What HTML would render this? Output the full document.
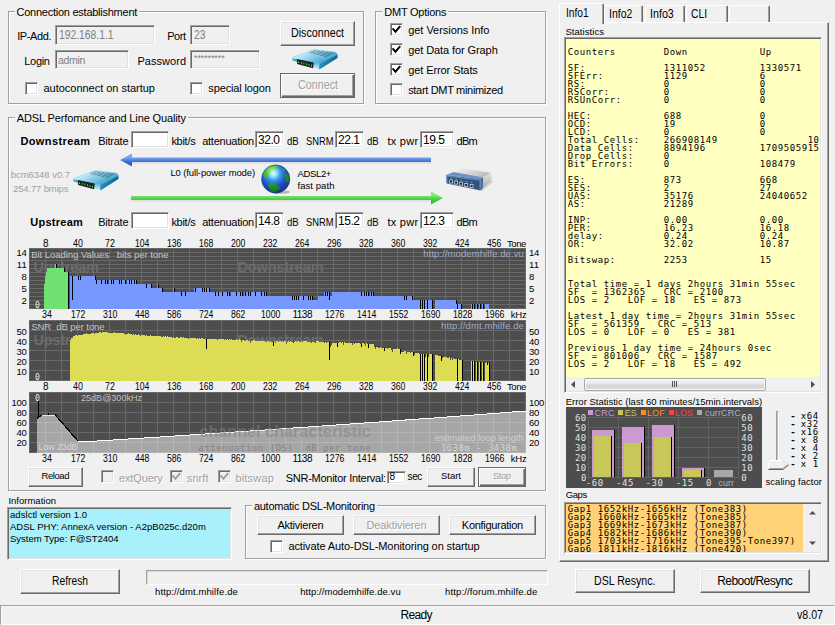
<!DOCTYPE html>
<html lang="en"><head><meta charset="utf-8"><title>DMT</title>
<style>
html,body{margin:0;padding:0;background:#F0F0F0;}
#win{position:relative;width:835px;height:625px;overflow:hidden;background:#F0F0F0;font-family:"Liberation Sans",Arial,sans-serif;font-size:11px;color:#000;}
#win div,#win span.t,#win svg{position:absolute;box-sizing:border-box;}
.t{white-space:pre;transform-origin:0 0;}
.m{font-family:"DejaVu Sans Mono","Liberation Mono",monospace;}
.grp{border:1px solid #A0A0A0;box-shadow:inset 1px 1px 0 #FFF,1px 1px 0 #FFF;}
.gt{background:#F0F0F0;}
.edit{border:1px solid;border-color:#A0A0A0 #FFF #FFF #A0A0A0;box-shadow:inset 1px 1px 0 #696969,inset -1px -1px 0 #E3E3E3;background:#FFF;}
.edit.dis{background:#F0F0F0;}
.btn{border:1px solid;border-color:#FFF #696969 #696969 #FFF;box-shadow:inset -1px -1px 0 #A0A0A0,inset 1px 1px 0 #E3E3E3;background:#F0F0F0;}
.btn.def{border-color:#696969;box-shadow:inset 1px 1px 0 #FFF,inset -1px -1px 0 #696969,inset -2px -2px 0 #A0A0A0;}
.cb{border:1px solid;border-color:#A0A0A0 #FFF #FFF #A0A0A0;box-shadow:inset 1px 1px 0 #696969,inset -1px -1px 0 #E3E3E3;background:#FFF;}
.cb.dis{background:#F0F0F0;}
.dt{color:#A0A0A0;text-shadow:1px 1px 0 #FFF;}

</style></head>
<body>
<div id="win">
<div class="grp" style="left:8px;top:11px;width:356px;height:93px;"></div>
<div class="gt" style="left:14.5px;top:9px;width:124.5px;height:5px;"></div>
<div class="edit dis" style="left:55px;top:25px;width:100px;height:20px;"></div>
<div class="edit dis" style="left:190px;top:25px;width:40px;height:20px;"></div>
<div class="edit dis" style="left:55px;top:50px;width:74px;height:19px;"></div>
<div class="edit dis" style="left:190px;top:50px;width:70px;height:19px;"></div>
<div class="cb" style="left:25px;top:82px;width:13px;height:13px;"></div>
<div class="cb" style="left:190px;top:82px;width:13px;height:13px;"></div>
<div class="btn" style="left:280px;top:21px;width:75px;height:25px;"></div>
<div class="btn def" style="left:280px;top:73px;width:75px;height:25px;"></div>
<div class="grp" style="left:375px;top:11px;width:171px;height:93px;"></div>
<div class="gt" style="left:382.3px;top:9px;width:66px;height:5px;"></div>
<div class="cb" style="left:390px;top:23px;width:13px;height:13px;"><svg width="13" height="13" viewBox="0 0 13 13" style="left:-1px;top:-1px"><path d="M3.2 6 L5.5 8.7 L9.6 3.8" fill="none" stroke="#000" stroke-width="1.9" stroke-linecap="square" stroke-linejoin="miter"/></svg></div>
<div class="cb" style="left:390px;top:43px;width:13px;height:13px;"><svg width="13" height="13" viewBox="0 0 13 13" style="left:-1px;top:-1px"><path d="M3.2 6 L5.5 8.7 L9.6 3.8" fill="none" stroke="#000" stroke-width="1.9" stroke-linecap="square" stroke-linejoin="miter"/></svg></div>
<div class="cb" style="left:390px;top:63px;width:13px;height:13px;"><svg width="13" height="13" viewBox="0 0 13 13" style="left:-1px;top:-1px"><path d="M3.2 6 L5.5 8.7 L9.6 3.8" fill="none" stroke="#000" stroke-width="1.9" stroke-linecap="square" stroke-linejoin="miter"/></svg></div>
<div class="cb" style="left:390px;top:83px;width:13px;height:13px;"></div>
<div class="grp" style="left:8px;top:117px;width:538px;height:374px;"></div>
<div class="gt" style="left:14.8px;top:115px;width:173px;height:5px;"></div>
<div class="edit" style="left:131px;top:131px;width:38px;height:17px;"></div>
<div class="edit" style="left:255px;top:131px;width:29px;height:17px;"></div>
<div class="edit" style="left:335px;top:131px;width:29px;height:17px;"></div>
<div class="edit" style="left:420px;top:131px;width:34px;height:17px;"></div>
<div class="edit" style="left:131px;top:212px;width:38px;height:17px;"></div>
<div class="edit" style="left:255px;top:212px;width:29px;height:17px;"></div>
<div class="edit" style="left:335px;top:212px;width:29px;height:17px;"></div>
<div class="edit" style="left:420px;top:212px;width:34px;height:17px;"></div>
<svg width="330" height="16" viewBox="0 0 330 16" style="left:118px;top:152px">
<defs><linearGradient id="gb" x1="0" y1="0" x2="0" y2="1"><stop offset="0.3" stop-color="#7CA4EE"/><stop offset="0.5" stop-color="#5584DC"/><stop offset="0.7" stop-color="#3461C6"/></linearGradient></defs>
<path d="M14 10.5 H313 V11.5 H14 Z" fill="#000" opacity="0.13"/><path d="M2 8 L14 1.5 L14 5.5 L313 5.5 L313 10 L14 10 L14 14.5 Z" fill="url(#gb)"/></svg>
<svg width="330" height="18" viewBox="0 0 330 18" style="left:128px;top:189px">
<defs><linearGradient id="gg" x1="0" y1="0" x2="0" y2="1"><stop offset="0.3" stop-color="#84E878"/><stop offset="0.5" stop-color="#5AD650"/><stop offset="0.7" stop-color="#38C438"/></linearGradient></defs>
<path d="M3 11.5 H303 V12.5 H3 Z" fill="#000" opacity="0.13"/><path d="M3 7 L303 7 L303 2.5 L315 9 L303 15.5 L303 11 L3 11 Z" fill="url(#gg)"/></svg>
<svg width="497" height="61" viewBox="0 0 497 61" shape-rendering="crispEdges" style="left:29px;top:248px"><rect width="497" height="61" fill="#4D4D4D"/><path d="M0.5 0V61M16.5 0V61M32.5 0V61M48.5 0V61M64.5 0V61M80.5 0V61M96.5 0V61M112.5 0V61M128.5 0V61M144.5 0V61M160.5 0V61M176.5 0V61M192.5 0V61M208.5 0V61M224.5 0V61M240.5 0V61M256.5 0V61M272.5 0V61M288.5 0V61M304.5 0V61M320.5 0V61M336.5 0V61M352.5 0V61M368.5 0V61M384.5 0V61M400.5 0V61M416.5 0V61M432.5 0V61M448.5 0V61M464.5 0V61M480.5 0V61M496.5 0V61M0 0.5H497M0 4.5H497M0 8.5H497M0 12.5H497M0 16.5H497M0 20.5H497M0 24.5H497M0 28.5H497M0 32.5H497M0 36.5H497M0 40.5H497M0 44.5H497M0 48.5H497M0 52.5H497M0 56.5H497M0 60.5H497" stroke="#696969" stroke-width="1" fill="none"/><text x="4.4" y="24" font-size="14.5" font-weight="700" fill="#6B6B6B" textLength="65.4" lengthAdjust="spacing" shape-rendering="auto">Upstream</text><text x="208.4" y="24" font-size="14.5" font-weight="700" fill="#6B6B6B" textLength="86.3" lengthAdjust="spacing">Downstream</text><path d="M15 36H16V61H15ZM16 28H17V61H16ZM17 24H18V61H17ZM18 20H26V61H18ZM26 16H27V61H26ZM27 20H35V61H27ZM35 24H39V61H35Z" fill="#70E070"/><path d="M41 28H43V61H41ZM43 52H44V61H43ZM44 28H49V61H44ZM49 32H50V61H49ZM50 28H51V61H50ZM51 32H52V61H51ZM52 28H66V61H52ZM66 32H67V61H66ZM67 36H68V61H67ZM68 32H72V61H68ZM72 36H73V61H72ZM73 32H76V61H73ZM76 36H77V61H76ZM77 32H78V61H77ZM78 36H80V61H78ZM80 32H82V61H80ZM82 36H83V61H82ZM83 32H84V61H83ZM84 36H85V61H84ZM85 32H90V61H85ZM90 36H91V61H90ZM91 32H92V61H91ZM92 36H93V61H92ZM93 32H96V61H93ZM96 36H98V61H96ZM98 32H100V61H98ZM100 36H101V61H100ZM101 32H102V61H101ZM102 36H103V61H102ZM103 32H105V61H103ZM105 36H106V61H105ZM106 32H107V61H106ZM107 36H117V61H107ZM117 40H118V61H117ZM118 36H122V61H118ZM122 40H128V61H122ZM128 36H129V61H128ZM129 40H133V61H129ZM133 44H144V61H133ZM144 40H145V61H144ZM145 44H152V61H145ZM152 48H153V61H152ZM153 44H156V61H153ZM156 48H157V61H156ZM157 44H165V61H157ZM165 40H166V61H165ZM166 44H167V61H166ZM167 40H173V61H167ZM173 44H174V61H173ZM174 40H175V61H174ZM175 44H176V61H175ZM176 40H177V61H176ZM177 44H178V61H177ZM178 40H180V61H178ZM180 44H186V61H180ZM186 48H187V61H186ZM187 44H189V61H187ZM189 48H190V61H189ZM190 44H193V61H190ZM193 48H194V61H193ZM194 44H198V61H194ZM198 48H199V61H198ZM199 44H200V61H199ZM200 48H202V61H200ZM202 44H207V61H202ZM207 48H208V61H207ZM208 44H211V61H208ZM211 48H212V61H211ZM212 44H213V61H212ZM213 48H215V61H213ZM215 44H216V61H215ZM216 48H217V61H216ZM217 44H219V61H217ZM219 48H220V61H219ZM220 44H221V61H220ZM221 48H222V61H221ZM222 44H226V61H222ZM226 48H227V61H226ZM227 44H232V61H227ZM232 48H233V61H232ZM233 44H235V61H233ZM235 48H236V61H235ZM236 44H237V61H236ZM237 48H263V61H237ZM263 52H264V61H263ZM264 48H265V61H264ZM265 52H266V61H265ZM266 48H267V61H266ZM267 52H268V61H267ZM268 48H269V61H268ZM269 52H270V61H269ZM270 48H274V61H270ZM274 52H275V61H274ZM275 48H279V61H275ZM279 52H280V61H279ZM280 48H281V61H280ZM281 52H282V61H281ZM282 48H283V61H282ZM283 52H289V61H283ZM289 48H295V61H289ZM295 44H296V61H295ZM296 48H297V61H296ZM297 44H298V61H297ZM298 48H299V61H298ZM299 44H300V61H299ZM300 52H301V61H300ZM301 48H303V61H301ZM303 44H332V61H303ZM332 48H333V61H332ZM333 44H335V61H333ZM335 48H336V61H335ZM336 44H337V61H336ZM337 48H338V61H337ZM338 44H339V61H338ZM339 48H341V61H339ZM341 44H342V61H341ZM342 48H343V61H342ZM343 44H344V61H343ZM344 48H375V61H344ZM375 52H376V61H375ZM376 48H377V61H376ZM377 52H378V61H377ZM378 48H383V61H378ZM383 52H391V61H383ZM392 52H393V61H392ZM394 52H395V61H394ZM396 52H398V61H396ZM399 52H403V61H399ZM406 52H427V61H406ZM427 56H428V61H427ZM429 56H432V61H429ZM442 56H443V61H442ZM444 56H445V61H444ZM447 56H448V61H447ZM450 56H451V61H450ZM453 56H454V61H453ZM456 56H460V61H456Z" fill="#7799FF"/><path d="M27 16H28V20H27ZM35 20H36V24H35ZM39 24H40V61H39ZM43 28H44V52H43ZM49 28H50V32H49ZM51 28H52V32H51ZM66 28H67V32H66ZM67 32H68V36H67ZM72 32H73V36H72ZM76 32H77V36H76ZM78 32H79V36H78ZM82 32H83V36H82ZM84 32H85V36H84ZM90 32H91V36H90ZM92 32H93V36H92ZM96 32H97V36H96ZM100 32H101V36H100ZM102 32H103V36H102ZM105 32H106V36H105ZM107 32H108V36H107ZM117 36H118V40H117ZM122 36H123V40H122ZM129 36H130V40H129ZM133 40H134V44H133ZM145 40H146V44H145ZM152 44H153V48H152ZM156 44H157V48H156ZM166 40H167V44H166ZM173 40H174V44H173ZM175 40H176V44H175ZM177 40H178V44H177ZM180 40H181V44H180ZM186 44H187V48H186ZM189 44H190V48H189ZM193 44H194V48H193ZM198 44H199V48H198ZM200 44H201V48H200ZM207 44H208V48H207ZM211 44H212V48H211ZM213 44H214V48H213ZM216 44H217V48H216ZM219 44H220V48H219ZM221 44H222V48H221ZM226 44H227V48H226ZM232 44H233V48H232ZM235 44H236V48H235ZM237 44H238V48H237ZM263 48H264V52H263ZM265 48H266V52H265ZM267 48H268V52H267ZM269 48H270V52H269ZM274 48H275V52H274ZM279 48H280V52H279ZM281 48H282V52H281ZM283 48H284V52H283ZM296 44H297V48H296ZM298 44H299V48H298ZM300 44H301V52H300ZM332 44H333V48H332ZM335 44H336V48H335ZM337 44H338V48H337ZM339 44H340V48H339ZM342 44H343V48H342ZM344 44H345V48H344ZM375 48H376V52H375ZM377 48H378V52H377ZM383 48H384V52H383ZM391 52H392V61H391ZM393 52H394V61H393ZM395 52H396V61H395ZM398 52H399V61H398ZM403 52H404V61H403ZM427 52H428V56H427ZM428 56H429V61H428ZM432 56H433V61H432ZM443 56H444V61H443ZM445 56H446V61H445ZM448 56H449V61H448ZM451 56H452V61H451ZM454 56H455V61H454Z" fill="#000"/></svg>
<svg width="497" height="61" viewBox="0 0 497 61" shape-rendering="crispEdges" style="left:29px;top:320px"><rect width="497" height="61" fill="#4D4D4D"/><path d="M0.5 0V61M16.5 0V61M32.5 0V61M48.5 0V61M64.5 0V61M80.5 0V61M96.5 0V61M112.5 0V61M128.5 0V61M144.5 0V61M160.5 0V61M176.5 0V61M192.5 0V61M208.5 0V61M224.5 0V61M240.5 0V61M256.5 0V61M272.5 0V61M288.5 0V61M304.5 0V61M320.5 0V61M336.5 0V61M352.5 0V61M368.5 0V61M384.5 0V61M400.5 0V61M416.5 0V61M432.5 0V61M448.5 0V61M464.5 0V61M480.5 0V61M496.5 0V61M0 0.5H497M0 10.5H497M0 20.5H497M0 30.5H497M0 40.5H497M0 50.5H497M0 60.5H497" stroke="#696969" stroke-width="1" fill="none"/><text x="4.4" y="25" font-size="14.5" font-weight="700" fill="#6B6B6B" textLength="65.4" lengthAdjust="spacing">Upstream</text><text x="208.4" y="25" font-size="14.5" font-weight="700" fill="#6B6B6B" textLength="86.3" lengthAdjust="spacing">Downstream</text><path d="M41 20H42V61H41ZM42 18H44V61H42ZM44 16H46V61H44ZM46 15H48V61H46ZM48 16H49V61H48ZM49 15H54V61H49ZM54 14H57V61H54ZM57 13H58V61H57ZM58 14H62V61H58ZM62 13H65V61H62ZM65 14H66V61H65ZM66 13H70V61H66ZM70 12H72V61H70ZM72 13H73V61H72ZM73 12H79V61H73ZM79 13H85V61H79ZM85 12H86V61H85ZM86 13H95V61H86ZM95 14H96V61H95ZM96 15H97V61H96ZM97 14H99V61H97ZM99 13H100V61H99ZM100 14H103V61H100ZM103 15H104V61H103ZM104 14H105V61H104ZM105 15H106V61H105ZM106 14H107V61H106ZM107 15H109V61H107ZM109 14H110V61H109ZM110 15H111V61H110ZM111 16H112V61H111ZM112 15H116V61H112ZM116 16H117V61H116ZM117 15H118V61H117ZM118 16H121V61H118ZM121 15H122V61H121ZM122 16H132V61H122ZM132 17H134V61H132ZM134 16H135V61H134ZM135 17H136V61H135ZM136 16H137V61H136ZM137 17H138V61H137ZM138 16H139V61H138ZM139 17H143V61H139ZM143 18H144V61H143ZM144 17H145V61H144ZM145 18H147V61H145ZM147 17H149V61H147ZM149 18H151V61H149ZM151 17H153V61H151ZM153 18H154V61H153ZM154 17H155V61H154ZM155 18H159V61H155ZM159 19H160V61H159ZM160 18H167V61H160ZM167 19H168V61H167ZM168 18H169V61H168ZM169 19H170V61H169ZM170 18H171V61H170ZM171 19H172V61H171ZM172 18H174V61H172ZM174 19H177V61H174ZM177 29H178V61H177ZM178 19H188V61H178ZM188 20H189V61H188ZM189 19H195V61H189ZM195 20H196V61H195ZM196 19H197V61H196ZM197 20H198V61H197ZM198 19H199V61H198ZM199 20H200V61H199ZM200 19H201V61H200ZM201 20H202V61H201ZM202 19H203V61H202ZM203 20H207V61H203ZM207 19H208V61H207ZM208 20H210V61H208ZM210 19H211V61H210ZM211 20H212V61H211ZM212 22H213V61H212ZM213 20H215V61H213ZM215 21H217V61H215ZM217 20H219V61H217ZM219 21H221V61H219ZM221 23H222V61H221ZM222 21H224V61H222ZM224 20H226V61H224ZM226 21H236V61H226ZM236 22H238V61H236ZM238 21H240V61H238ZM240 22H241V61H240ZM241 21H242V61H241ZM242 22H244V61H242ZM244 26H245V61H244ZM245 21H246V61H245ZM246 23H247V61H246ZM247 21H249V61H247ZM249 22H250V61H249ZM250 21H252V61H250ZM252 22H253V61H252ZM253 21H254V61H253ZM254 22H255V61H254ZM255 21H257V61H255ZM257 24H258V61H257ZM258 22H259V61H258ZM259 21H260V61H259ZM260 22H261V61H260ZM261 21H262V61H261ZM262 22H264V61H262ZM264 23H265V61H264ZM265 22H266V61H265ZM266 21H267V61H266ZM267 22H268V61H267ZM268 21H270V61H268ZM270 22H272V61H270ZM272 21H273V61H272ZM273 22H274V61H273ZM274 21H278V61H274ZM278 22H282V61H278ZM282 23H283V61H282ZM283 22H286V61H283ZM286 23H287V61H286ZM287 21H290V61H287ZM290 22H295V61H290ZM295 23H296V61H295ZM296 22H297V61H296ZM297 23H298V61H297ZM298 22H300V61H298ZM300 40H301V61H300ZM301 27H302V61H301ZM302 25H303V61H302ZM303 23H308V61H303ZM308 27H309V61H308ZM309 23H310V61H309ZM310 22H312V61H310ZM312 23H313V61H312ZM313 22H314V61H313ZM314 25H315V61H314ZM315 22H316V61H315ZM316 23H323V61H316ZM323 25H324V61H323ZM324 23H325V61H324ZM325 24H326V61H325ZM326 23H331V61H326ZM331 24H332V61H331ZM332 27H333V61H332ZM333 23H335V61H333ZM335 24H336V61H335ZM336 26H337V61H336ZM337 23H338V61H337ZM338 24H339V61H338ZM339 28H340V61H339ZM340 24H345V61H340ZM345 27H346V61H345ZM346 29H347V61H346ZM347 27H349V61H347ZM349 28H351V61H349ZM351 27H352V61H351ZM352 28H355V61H352ZM355 31H356V61H355ZM356 28H358V61H356ZM358 29H359V61H358ZM359 28H362V61H359ZM362 30H363V61H362ZM363 32H364V61H363ZM364 29H368V61H364ZM368 28H369V61H368ZM369 29H371V61H369ZM371 34H372V61H371ZM372 32H375V61H372ZM375 31H377V61H375ZM377 34H378V61H377ZM378 32H381V61H378ZM381 33H382V61H381ZM382 32H384V61H382ZM384 36H385V61H384ZM385 35H386V61H385ZM386 33H390V61H386ZM390 34H391V61H390ZM392 34H393V61H392ZM394 34H395V61H394ZM396 37H397V61H396ZM397 34H398V61H397ZM399 37H400V61H399ZM400 34H403V61H400ZM406 35H409V61H406ZM409 36H412V61H409ZM412 41H413V61H412ZM413 38H414V61H413ZM414 37H418V61H414ZM418 38H420V61H418ZM420 37H421V61H420ZM421 40H422V61H421ZM422 38H423V61H422ZM423 40H424V61H423ZM424 38H425V61H424ZM425 39H428V61H425ZM429 39H430V61H429ZM430 40H433V61H430ZM442 41H443V61H442ZM444 41H445V61H444ZM447 42H448V61H447ZM450 42H451V61H450ZM453 42H454V61H453ZM456 43H457V61H456ZM457 42H458V61H457ZM458 45H459V61H458ZM459 43H460V61H459Z" fill="#DDDD55"/><path d="M177 19H178V29H177ZM244 22H245V26H244ZM300 22H301V40H300ZM308 23H309V27H308ZM332 24H333V27H332ZM339 24H340V28H339ZM355 28H356V31H355ZM371 29H372V34H371ZM384 32H385V36H384ZM391 34H392V61H391ZM393 34H394V61H393ZM395 34H396V61H395ZM398 34H399V61H398ZM403 34H404V61H403ZM412 36H413V41H412ZM428 39H429V61H428ZM433 40H434V61H433ZM443 41H444V61H443ZM445 41H446V61H445ZM448 42H449V61H448ZM451 42H452V61H451ZM454 42H455V61H454ZM458 42H459V45H458ZM460 43H461V61H460Z" fill="#000"/></svg>
<svg width="497" height="61" viewBox="0 0 497 61" shape-rendering="crispEdges" style="left:29px;top:392px"><rect width="497" height="61" fill="#4D4D4D"/><path d="M0.5 0V61M16.5 0V61M32.5 0V61M48.5 0V61M64.5 0V61M80.5 0V61M96.5 0V61M112.5 0V61M128.5 0V61M144.5 0V61M160.5 0V61M176.5 0V61M192.5 0V61M208.5 0V61M224.5 0V61M240.5 0V61M256.5 0V61M272.5 0V61M288.5 0V61M304.5 0V61M320.5 0V61M336.5 0V61M352.5 0V61M368.5 0V61M384.5 0V61M400.5 0V61M416.5 0V61M432.5 0V61M448.5 0V61M464.5 0V61M480.5 0V61M496.5 0V61M0 0.5H497M0 10.5H497M0 20.5H497M0 30.5H497M0 40.5H497M0 50.5H497M0 60.5H497" stroke="#696969" stroke-width="1" fill="none"/><polygon points="8,61 8,26.5 10,25 12,23.7 13,23.2 26.5,23.2 49.3,49.4 62,49.4 74,48.6 86,47.9 98,47.1 110,46.3 122,45.6 134,44.8 146,44.0 158,43.2 170,42.4 182,41.6 194,40.8 206,40.0 218,39.2 230,38.4 242,37.6 254,36.7 266,35.9 278,35.1 290,34.2 302,33.4 314,32.5 326,31.7 338,30.8 350,30.0 362,29.1 374,28.2 386,27.3 398,26.5 410,25.6 422,24.7 434,23.8 446,22.9 458,22.0 470,21.1 482,20.1 494,19.2 497,19.0 497,61" fill="rgba(255,255,255,0.5)"/><polyline points="49.3,49.4 62,49.4 74,48.6 86,47.9 98,47.1 110,46.3 122,45.6 134,44.8 146,44.0 158,43.2 170,42.4 182,41.6 194,40.8 206,40.0 218,39.2 230,38.4 242,37.6 254,36.7 266,35.9 278,35.1 290,34.2 302,33.4 314,32.5 326,31.7 338,30.8 350,30.0 362,29.1 374,28.2 386,27.3 398,26.5 410,25.6 422,24.7 434,23.8 446,22.9 458,22.0 470,21.1 482,20.1 494,19.2 497,19.0" fill="none" stroke="#FFF" stroke-width="1"/><polyline points="13,23.2 26.5,23.2" fill="none" stroke="#E8E8E8" stroke-width="1"/><polyline points="26.5,23.2 49.3,49.4" fill="none" stroke="#000" stroke-width="1.2"/><polyline points="8,26.5 10,25 12,23.7 13,23.2" fill="none" stroke="#000" stroke-width="1"/><path d="M9.5 5V26M19.5 20.5V23M26.5 21.5V23.5" stroke="#000" stroke-width="1" fill="none"/></svg>
<div class="btn" style="left:28px;top:467px;width:55px;height:20px;"></div>
<div class="cb dis" style="left:101px;top:470px;width:13px;height:13px;"></div>
<div class="cb dis" style="left:170px;top:470px;width:13px;height:13px;"><svg width="13" height="13" viewBox="0 0 13 13" style="left:-1px;top:-1px"><path d="M3.2 6 L5.5 8.7 L9.6 3.8" fill="none" stroke="#A0A0A0" stroke-width="1.9" stroke-linecap="square" stroke-linejoin="miter"/></svg></div>
<div class="cb dis" style="left:218px;top:470px;width:13px;height:13px;"><svg width="13" height="13" viewBox="0 0 13 13" style="left:-1px;top:-1px"><path d="M3.2 6 L5.5 8.7 L9.6 3.8" fill="none" stroke="#A0A0A0" stroke-width="1.9" stroke-linecap="square" stroke-linejoin="miter"/></svg></div>
<div class="edit" style="left:387px;top:471px;width:19px;height:13px;"></div>
<div class="btn" style="left:427px;top:467px;width:48px;height:20px;"></div>
<div class="btn def" style="left:478px;top:467px;width:48px;height:20px;"></div>
<div class="edit" style="left:7px;top:507px;width:225px;height:53px;background:#A8F0FB;"></div>
<div class="grp" style="left:245px;top:505px;width:301px;height:54px;"></div>
<div class="gt" style="left:251.9px;top:503px;width:125px;height:5px;"></div>
<div class="btn" style="left:257px;top:515px;width:87px;height:20px;"></div>
<div class="btn" style="left:353px;top:515px;width:87px;height:20px;"></div>
<div class="btn" style="left:449px;top:515px;width:87px;height:20px;"></div>
<div class="cb" style="left:270px;top:540px;width:13px;height:13px;"></div>
<div class="btn" style="left:20px;top:569px;width:100px;height:25px;"></div>
<div style="left:146px;top:570px;width:402px;height:15px;border-top:1px solid #A0A0A0;border-left:1px solid #A0A0A0;border-right:1px solid #FFF;border-bottom:1px solid #FFF;box-shadow:inset 1px 1px 0 #D8D8D8;"></div>
<div style="left:0px;top:605px;width:835px;height:20px;border:1px solid;border-color:#A0A0A0 #FFF #FFF #A0A0A0;box-shadow:inset 1px 1px 0 #F8F8F8;"></div>
<div style="left:559px;top:22px;width:270px;height:540px;border:1px solid;border-color:#FFF #696969 #696969 #FFF;box-shadow:inset -1px -1px 0 #A0A0A0;"></div>
<div style="left:604px;top:5px;width:39px;height:17px;border:1px solid;border-color:#FFF #696969 transparent #FFF;border-bottom:none;border-radius:2px 2px 0 0;box-shadow:inset -1px 0 0 #A0A0A0;background:#F0F0F0;"></div>
<div style="left:645px;top:5px;width:40px;height:17px;border:1px solid;border-color:#FFF #696969 transparent #FFF;border-bottom:none;border-radius:2px 2px 0 0;box-shadow:inset -1px 0 0 #A0A0A0;background:#F0F0F0;"></div>
<div style="left:686px;top:5px;width:42px;height:17px;border:1px solid;border-color:#FFF #696969 transparent #FFF;border-bottom:none;border-radius:2px 2px 0 0;box-shadow:inset -1px 0 0 #A0A0A0;background:#F0F0F0;"></div>
<div style="left:729px;top:5px;width:41px;height:17px;border:1px solid;border-color:#FFF #696969 transparent #FFF;border-bottom:none;border-radius:2px 2px 0 0;box-shadow:inset -1px 0 0 #A0A0A0;background:#F0F0F0;"></div>
<div style="left:559px;top:3px;width:45px;height:21px;border:1px solid;border-color:#FFF #696969 transparent #FFF;border-bottom:none;border-radius:2px 2px 0 0;box-shadow:inset -1px 0 0 #A0A0A0;background:#F0F0F0;"></div>
<div class="edit" style="left:564px;top:37px;width:258px;height:356px;background:#FFFFC0;"></div>
<div style="left:566px;top:377px;width:254px;height:14px;background:#F0F0F0;"></div>
<svg width="254" height="13" viewBox="0 0 254 13" style="left:566px;top:378px"><path d="M9 3 L5 6.5 L9 10 Z M245 3 L249 6.5 L245 10 Z" fill="#505050"/></svg>
<div style="left:584px;top:378px;width:182px;height:13px;background:linear-gradient(#F4F4F4,#E8E8E8 45%,#D6D6D6 55%,#DCDCDC);border:1px solid #A8A8A8;border-radius:2px;box-shadow:inset 0 0 0 1px #F8F8F8;"></div>
<div style="left:672px;top:381px;width:1px;height:6px;background:#505050;"></div>
<div style="left:674px;top:381px;width:1px;height:6px;background:#505050;"></div>
<div style="left:676px;top:381px;width:1px;height:6px;background:#505050;"></div>
<svg width="196" height="81" viewBox="0 0 196 81" shape-rendering="crispEdges" style="left:566px;top:407px"><rect width="196" height="81" fill="#4D4D4D"/><path d="M22.5 10V71M52.5 10V71M82.5 10V71M112.5 10V71M142.5 10V71M172.5 10V71M22 10.5H173M22 20.5H173M22 30.5H173M22 40.5H173M22 50.5H173M22 60.5H173M22 70.5H173" stroke="#626262" fill="none"/><rect x="26" y="23" width="23" height="47" fill="#000"/><rect x="26" y="23" width="22" height="47" fill="#CC99D0"/><rect x="28" y="29" width="18" height="41" fill="#000"/><rect x="28" y="29" width="17" height="41" fill="#C8C85A"/><rect x="56" y="20" width="23" height="50" fill="#000"/><rect x="56" y="20" width="22" height="50" fill="#CC99D0"/><rect x="58" y="36" width="18" height="34" fill="#000"/><rect x="58" y="36" width="17" height="34" fill="#C8C85A"/><rect x="86" y="18" width="23" height="52" fill="#000"/><rect x="86" y="18" width="22" height="52" fill="#CC99D0"/><rect x="88" y="30" width="18" height="40" fill="#000"/><rect x="88" y="30" width="17" height="40" fill="#C8C85A"/><rect x="116" y="61" width="23" height="9" fill="#000"/><rect x="116" y="61" width="22" height="9" fill="#CC99D0"/><rect x="118" y="63" width="18" height="7" fill="#000"/><rect x="118" y="63" width="17" height="7" fill="#C8C85A"/><rect x="148" y="63" width="19" height="7" fill="#A8A8A8"/><rect x="22" y="3" width="5" height="5" fill="#CC99D0"/><rect x="52" y="3" width="5" height="5" fill="#C8C850"/><rect x="75" y="3" width="5" height="5" fill="#FF8C1A"/><rect x="103" y="3" width="5" height="5" fill="#FF4040"/><rect x="131" y="3" width="5" height="5" fill="#A8A8A8"/></svg>
<div style="left:776px;top:411px;width:3px;height:49px;border-left:1px solid #A0A0A0;border-top:1px solid #A0A0A0;border-right:1px solid #FFF;background:#B8B8B8;"></div>
<svg width="24" height="12" viewBox="0 0 24 12" style="left:767px;top:459px"><path d="M1.5 1.5 H16 L21.5 6 L16 10.5 H1.5 Z" fill="#F0F0F0" stroke="#696969" stroke-width="1"/><path d="M1.5 10 V1.5 H16 L21 5.6" fill="none" stroke="#FFF" stroke-width="1"/><path d="M2.5 9.5 H15.7 L20 6" fill="none" stroke="#A0A0A0" stroke-width="1"/></svg>
<div class="edit" style="left:564px;top:502px;width:258px;height:52px;background:#FFD278;"></div>
<div style="left:803px;top:504px;width:17px;height:48px;background:#F0F0F0;"></div>
<svg width="17" height="47" viewBox="0 0 17 47" style="left:803px;top:504px"><path d="M6 10.5 L9.5 7 L13 10.5 Z M6 37.5 L9.5 41 L13 37.5 Z" fill="#505050"/></svg>
<div class="btn" style="left:575px;top:569px;width:100px;height:24px;"></div>
<div class="btn" style="left:700px;top:569px;width:110px;height:24px;"></div>
<svg width="48" height="23" viewBox="0 0 48 23" style="left:291px;top:48px">
<defs>
<linearGradient id="rta" x1="0" y1="0" x2="1" y2="0.6"><stop offset="0" stop-color="#86D0E8"/><stop offset="0.35" stop-color="#BCE8F4"/><stop offset="0.7" stop-color="#6CC0DE"/><stop offset="1" stop-color="#3596C2"/></linearGradient>
<linearGradient id="rla" x1="0" y1="0" x2="0" y2="1"><stop offset="0" stop-color="#1F8DB8"/><stop offset="0.55" stop-color="#56B6D8"/><stop offset="1" stop-color="#D4F2FA"/></linearGradient>
<linearGradient id="rra" x1="0" y1="0" x2="1" y2="0"><stop offset="0" stop-color="#2490BE"/><stop offset="1" stop-color="#0F6494"/></linearGradient>
</defs>
<path d="M1.6 12.6 L27.8 21.2 Q28.6 21.4 29.6 20.8 L46 10.2 Q46.6 9.6 46.4 8.6 L46.3 6.6 L28.5 15.8 L1.2 10 Z" fill="url(#rla)"/>
<path d="M28.5 15.8 L46.3 6.4 L46.4 9 Q46.5 9.8 45.8 10.3 L29.6 20.8 Q28.8 21.3 28.1 21.2 Z" fill="url(#rra)"/>
<path d="M1.4 10.3 Q0.6 9.6 2 8.8 L20.5 1.4 Q22 0.8 23.5 1 L43.5 3.7 Q45.6 4.1 46.3 6 Q46.6 6.8 45.6 7.3 L29.8 15.6 Q28.6 16.1 27.3 15.8 Z" fill="url(#rta)"/>
<g fill="#27414F" opacity="0.6"><path d="M22.5 2.2 L25.7 2.6 L24.8 3.1 L21.7 2.6 Z"/><path d="M21.1 2.9 L24.2 3.4 L23.3 3.9 L20.3 3.3 Z"/><path d="M19.7 3.6 L22.7 4.2 L21.8 4.7 L18.9 4.1 Z"/><path d="M18.3 4.4 L21.2 5.0 L20.3 5.4 L17.5 4.8 Z"/><path d="M26.7 2.8 L29.9 3.2 L29.0 3.8 L25.8 3.3 Z"/><path d="M25.2 3.6 L28.3 4.1 L27.3 4.6 L24.3 4.1 Z"/><path d="M23.7 4.4 L26.7 4.9 L25.7 5.4 L22.8 4.9 Z"/><path d="M22.2 5.2 L25.1 5.8 L24.1 6.3 L21.3 5.7 Z"/><path d="M31.0 3.4 L34.2 3.9 L33.1 4.4 L30.0 3.9 Z"/><path d="M29.3 4.3 L32.4 4.8 L31.4 5.3 L28.3 4.8 Z"/><path d="M27.7 5.1 L30.7 5.7 L29.6 6.2 L26.7 5.6 Z"/><path d="M26.0 6.0 L28.9 6.6 L27.9 7.1 L25.0 6.5 Z"/><path d="M35.2 4.0 L38.4 4.5 L37.3 5.1 L34.2 4.6 Z"/><path d="M33.4 4.9 L36.5 5.4 L35.4 6.0 L32.4 5.5 Z"/><path d="M31.7 5.9 L34.6 6.4 L33.5 7.0 L30.6 6.4 Z"/><path d="M29.9 6.8 L32.8 7.4 L31.6 8.0 L28.8 7.3 Z"/><path d="M39.5 4.6 L42.6 5.1 L41.4 5.7 L38.3 5.2 Z"/><path d="M37.6 5.6 L40.6 6.1 L39.4 6.7 L36.4 6.2 Z"/><path d="M35.6 6.6 L38.6 7.2 L37.4 7.8 L34.5 7.2 Z"/><path d="M33.7 7.6 L36.6 8.2 L35.4 8.8 L32.6 8.2 Z"/></g>
<path d="M5.9 11 L22.8 14.6 L22 20.2 L6.2 15.9 Z" fill="#1A2226"/>
<g fill="#46E24A"><rect x="7" y="13.2" width="0.9" height="1.8"/><rect x="9.9" y="13.9" width="0.9" height="1.8"/><rect x="12.4" y="14.6" width="0.9" height="1.8"/><rect x="15" y="15.3" width="0.9" height="1.8"/><rect x="17.5" y="16" width="0.9" height="1.8"/><rect x="20.1" y="16.7" width="0.9" height="2"/></g>
</svg>
<svg width="48" height="23" viewBox="0 0 48 23" style="left:72px;top:169px">
<defs>
<linearGradient id="rtb" x1="0" y1="0" x2="1" y2="0.6"><stop offset="0" stop-color="#86D0E8"/><stop offset="0.35" stop-color="#BCE8F4"/><stop offset="0.7" stop-color="#6CC0DE"/><stop offset="1" stop-color="#3596C2"/></linearGradient>
<linearGradient id="rlb" x1="0" y1="0" x2="0" y2="1"><stop offset="0" stop-color="#1F8DB8"/><stop offset="0.55" stop-color="#56B6D8"/><stop offset="1" stop-color="#D4F2FA"/></linearGradient>
<linearGradient id="rrb" x1="0" y1="0" x2="1" y2="0"><stop offset="0" stop-color="#2490BE"/><stop offset="1" stop-color="#0F6494"/></linearGradient>
</defs>
<path d="M1.6 12.6 L27.8 21.2 Q28.6 21.4 29.6 20.8 L46 10.2 Q46.6 9.6 46.4 8.6 L46.3 6.6 L28.5 15.8 L1.2 10 Z" fill="url(#rlb)"/>
<path d="M28.5 15.8 L46.3 6.4 L46.4 9 Q46.5 9.8 45.8 10.3 L29.6 20.8 Q28.8 21.3 28.1 21.2 Z" fill="url(#rrb)"/>
<path d="M1.4 10.3 Q0.6 9.6 2 8.8 L20.5 1.4 Q22 0.8 23.5 1 L43.5 3.7 Q45.6 4.1 46.3 6 Q46.6 6.8 45.6 7.3 L29.8 15.6 Q28.6 16.1 27.3 15.8 Z" fill="url(#rtb)"/>
<g fill="#27414F" opacity="0.6"><path d="M22.5 2.2 L25.7 2.6 L24.8 3.1 L21.7 2.6 Z"/><path d="M21.1 2.9 L24.2 3.4 L23.3 3.9 L20.3 3.3 Z"/><path d="M19.7 3.6 L22.7 4.2 L21.8 4.7 L18.9 4.1 Z"/><path d="M18.3 4.4 L21.2 5.0 L20.3 5.4 L17.5 4.8 Z"/><path d="M26.7 2.8 L29.9 3.2 L29.0 3.8 L25.8 3.3 Z"/><path d="M25.2 3.6 L28.3 4.1 L27.3 4.6 L24.3 4.1 Z"/><path d="M23.7 4.4 L26.7 4.9 L25.7 5.4 L22.8 4.9 Z"/><path d="M22.2 5.2 L25.1 5.8 L24.1 6.3 L21.3 5.7 Z"/><path d="M31.0 3.4 L34.2 3.9 L33.1 4.4 L30.0 3.9 Z"/><path d="M29.3 4.3 L32.4 4.8 L31.4 5.3 L28.3 4.8 Z"/><path d="M27.7 5.1 L30.7 5.7 L29.6 6.2 L26.7 5.6 Z"/><path d="M26.0 6.0 L28.9 6.6 L27.9 7.1 L25.0 6.5 Z"/><path d="M35.2 4.0 L38.4 4.5 L37.3 5.1 L34.2 4.6 Z"/><path d="M33.4 4.9 L36.5 5.4 L35.4 6.0 L32.4 5.5 Z"/><path d="M31.7 5.9 L34.6 6.4 L33.5 7.0 L30.6 6.4 Z"/><path d="M29.9 6.8 L32.8 7.4 L31.6 8.0 L28.8 7.3 Z"/><path d="M39.5 4.6 L42.6 5.1 L41.4 5.7 L38.3 5.2 Z"/><path d="M37.6 5.6 L40.6 6.1 L39.4 6.7 L36.4 6.2 Z"/><path d="M35.6 6.6 L38.6 7.2 L37.4 7.8 L34.5 7.2 Z"/><path d="M33.7 7.6 L36.6 8.2 L35.4 8.8 L32.6 8.2 Z"/></g>
<path d="M5.9 11 L22.8 14.6 L22 20.2 L6.2 15.9 Z" fill="#1A2226"/>
<g fill="#46E24A"><rect x="7" y="13.2" width="0.9" height="1.8"/><rect x="9.9" y="13.9" width="0.9" height="1.8"/><rect x="12.4" y="14.6" width="0.9" height="1.8"/><rect x="15" y="15.3" width="0.9" height="1.8"/><rect x="17.5" y="16" width="0.9" height="1.8"/><rect x="20.1" y="16.7" width="0.9" height="2"/></g>
</svg>
<svg width="32" height="32" viewBox="0 0 32 32" style="left:260px;top:163px">
<defs>
<radialGradient id="gl1" cx="0.42" cy="0.3" r="0.72"><stop offset="0" stop-color="#E4FFFF"/><stop offset="0.16" stop-color="#8CE6FA"/><stop offset="0.36" stop-color="#3A90E6"/><stop offset="0.62" stop-color="#2050C4"/><stop offset="0.88" stop-color="#1B3A9C"/><stop offset="1" stop-color="#142C74"/></radialGradient>
<radialGradient id="gl2" gradientUnits="userSpaceOnUse" cx="12.5" cy="9" r="22"><stop offset="0" stop-color="#D8F4A0"/><stop offset="0.3" stop-color="#4CC03C"/><stop offset="0.65" stop-color="#1E922A"/><stop offset="1" stop-color="#0E6A1C"/></radialGradient>
<clipPath id="glc"><circle cx="15.7" cy="16" r="14.1"/></clipPath>
</defs>
<ellipse cx="21" cy="29" rx="9" ry="1.8" fill="#000" opacity="0.25"/>
<circle cx="15.7" cy="16" r="14.2" fill="url(#gl1)"/>
<g clip-path="url(#glc)" fill="url(#gl2)">
<path d="M3.3 11.5 Q3.4 9.5 4.4 7.9 Q6 5.5 8 4.3 Q10.5 2.8 13.7 2.5 Q16 2.2 18 2.9 Q17.6 4.6 16.6 5.8 Q15.2 6.6 13.7 7.2 Q12.4 8.2 11.6 9.4 Q9.6 10.6 8 12.2 Q7 14 6.2 15.8 Q5 15.4 4.4 14.4 Q3.5 13 3.3 11.5 Z"/>
<path d="M8 21.2 Q9.6 20 11.6 19.8 Q14 20.4 15.9 21.6 Q18.4 22.8 20.2 24.5 Q19.4 26 18 27.3 Q16.4 28.8 14.4 29.6 Q12.8 29.6 11.6 28.8 Q10.2 27.2 9.4 25.2 Q8.2 23.2 8 21.2 Z"/>
<path d="M25.2 11.5 Q26.2 10.6 27.4 10.4 Q28.8 11.8 29.5 13.7 Q29.9 15.5 29.5 17.3 Q28.6 18.6 27.4 19.4 Q26.2 18.6 25.6 17.3 Q24.8 14.4 25.2 11.5 Z"/>
<path d="M21.6 5 Q23 5 24.5 5.8 Q25.6 7 25.9 8.6 Q24.8 8.4 23.8 7.6 Q22.4 6.4 21.6 5 Z" opacity="0.85"/>
</g>
<circle cx="15.7" cy="16" r="14.2" fill="none" stroke="#17307A" stroke-width="0.6" opacity="0.7"/>
</svg>
<svg width="48" height="24" viewBox="0 0 48 24" style="left:446px;top:168px">
<defs>
<linearGradient id="sw1" x1="0" y1="0" x2="1" y2="0.3"><stop offset="0" stop-color="#FFFFFF"/><stop offset="1" stop-color="#BDBDBD"/></linearGradient>
<linearGradient id="sw2" x1="0" y1="0" x2="0" y2="1"><stop offset="0" stop-color="#E4E4E4"/><stop offset="1" stop-color="#A4A4A4"/></linearGradient>
<linearGradient id="sw3" x1="0" y1="0" x2="0" y2="1"><stop offset="0" stop-color="#5E86BC"/><stop offset="1" stop-color="#3C629A"/></linearGradient>
</defs>
<path d="M34.2 22.4 L45.7 12.7 L47.5 13.5 L36 23.2 Z" fill="#000" opacity="0.12"/>
<path d="M0.1 6.9 L17 0.5 L45 4.8 L34.9 10.9 Z" fill="url(#sw1)"/>
<path d="M34.9 10.9 L45 4.8 L45.7 12.7 L34.2 22.4 Z" fill="url(#sw2)"/>
<path d="M0.1 6.9 L7.6 4 L37.1 9.5 L34.9 10.9 Z" fill="#6C92C6"/>
<path d="M34.9 10.9 L37.1 9.5 L36.7 20.4 L34.2 22.4 Z" fill="#44689E"/>
<path d="M0.1 6.9 L34.9 10.9 L34.2 22.4 L0.5 15.6 Z" fill="url(#sw3)"/>
<path d="M1.5 8.7 L33.2 13 L32.8 20.9 L1.8 14.8 Z" fill="#34507E"/>
<rect x="3.3" y="11.6" width="3.6" height="3.7" fill="#D8DCE0"/><rect x="3.9999999999999996" y="12.4" width="2.2" height="2.2" fill="#22262A"/><rect x="4.199999999999999" y="9.8" width="1.8" height="0.8" fill="#58D048"/><rect x="8.399999999999999" y="12.7" width="3.6" height="3.7" fill="#D8DCE0"/><rect x="9.1" y="13.5" width="2.2" height="2.2" fill="#22262A"/><rect x="9.299999999999999" y="10.9" width="1.8" height="0.8" fill="#58D048"/><rect x="13.399999999999999" y="13.799999999999999" width="3.6" height="3.7" fill="#D8DCE0"/><rect x="14.1" y="14.6" width="2.2" height="2.2" fill="#22262A"/><rect x="14.299999999999999" y="12.0" width="1.8" height="0.8" fill="#58D048"/><rect x="18.4" y="15.0" width="3.6" height="3.7" fill="#D8DCE0"/><rect x="19.099999999999998" y="15.8" width="2.2" height="2.2" fill="#22262A"/><rect x="19.3" y="13.200000000000001" width="1.8" height="0.8" fill="#58D048"/><rect x="23.8" y="16.099999999999998" width="3.6" height="3.7" fill="#D8DCE0"/><rect x="24.5" y="16.9" width="2.2" height="2.2" fill="#22262A"/><rect x="24.700000000000003" y="14.299999999999999" width="1.8" height="0.8" fill="#58D048"/>
</svg>
<span class="t" style="left:16.50px;top:6.00px;font-size:11px;line-height:12px;letter-spacing:-0.25px;">Connection establishment</span>
<span class="t" style="left:17.20px;top:30.00px;font-size:11px;line-height:12px;letter-spacing:-0.38px;">IP-Add.</span>
<span class="t" style="left:59.10px;top:27.00px;font-size:13px;line-height:15px;transform:scaleX(0.7949);color:#808080;">192.168.1.1</span>
<span class="t" style="left:167.20px;top:30.00px;font-size:11px;line-height:12px;letter-spacing:-0.4px;">Port</span>
<span class="t" style="left:193.50px;top:27.00px;font-size:13px;line-height:15px;transform:scaleX(0.7948);color:#808080;">23</span>
<span class="t" style="left:24.30px;top:55.00px;font-size:11px;line-height:12px;letter-spacing:-0.32px;">Login</span>
<span class="t" style="left:58.10px;top:54.00px;font-size:10.5px;line-height:12px;letter-spacing:-0.34px;color:#808080;">admin</span>
<span class="t" style="left:137.50px;top:55.00px;font-size:11px;line-height:12px;letter-spacing:0.03px;">Password</span>
<span class="t" style="left:194.00px;top:53.00px;font-size:9px;line-height:10px;letter-spacing:-0.11px;color:#808080;">*********</span>
<span class="t" style="left:43.50px;top:82.00px;font-size:11px;line-height:12px;letter-spacing:-0.02px;">autoconnect on startup</span>
<span class="t" style="left:208.30px;top:82.00px;font-size:11px;line-height:12px;letter-spacing:-0.13px;">special logon</span>
<span class="t" style="left:291.00px;top:26.00px;font-size:12px;line-height:14px;transform:scaleX(0.8926);">Disconnect</span>
<span class="t dt" style="left:297.50px;top:78.00px;font-size:12px;line-height:14px;transform:scaleX(0.8948);color:#A0A0A0;">Connect</span>
<span class="t" style="left:384.30px;top:6.00px;font-size:11px;line-height:12px;letter-spacing:-0.24px;">DMT Options</span>
<span class="t" style="left:408.20px;top:24.00px;font-size:11px;line-height:12px;letter-spacing:-0.04px;">get Versions Info</span>
<span class="t" style="left:408.20px;top:44.00px;font-size:11px;line-height:12px;letter-spacing:-0.09px;">get Data for Graph</span>
<span class="t" style="left:408.20px;top:64.00px;font-size:11px;line-height:12px;letter-spacing:-0.09px;">get Error Stats</span>
<span class="t" style="left:408.20px;top:84.00px;font-size:11px;line-height:12px;letter-spacing:-0.32px;">start DMT minimized</span>
<span class="t" style="left:16.80px;top:112.00px;font-size:11px;line-height:12px;letter-spacing:-0.13px;">ADSL Perfomance and Line Quality</span>
<span class="t" style="left:20.40px;top:135.00px;font-size:11px;line-height:12px;letter-spacing:0.41px;font-weight:700;">Downstream</span>
<span class="t" style="left:98.30px;top:135.00px;font-size:11px;line-height:12px;letter-spacing:-0.26px;">Bitrate</span>
<span class="t" style="left:171.40px;top:135.00px;font-size:11px;line-height:12px;letter-spacing:-0.28px;">kbit/s</span>
<span class="t" style="left:202.20px;top:135.00px;font-size:11px;line-height:12px;letter-spacing:-0.25px;">attenuation</span>
<span class="t" style="left:258.00px;top:133.00px;font-size:12px;line-height:14px;letter-spacing:-0.46px;">32.0</span>
<span class="t" style="left:286.80px;top:135.00px;font-size:11px;line-height:12px;transform:scaleX(0.8687);">dB</span>
<span class="t" style="left:306.20px;top:135.00px;font-size:11px;line-height:12px;transform:scaleX(0.849);">SNRM</span>
<span class="t" style="left:338.00px;top:133.00px;font-size:12px;line-height:14px;letter-spacing:-0.46px;">22.1</span>
<span class="t" style="left:366.60px;top:135.00px;font-size:11px;line-height:12px;transform:scaleX(0.8687);">dB</span>
<span class="t" style="left:387.40px;top:135.00px;font-size:11px;line-height:12px;letter-spacing:0.28px;">tx pwr</span>
<span class="t" style="left:423.00px;top:133.00px;font-size:12px;line-height:14px;letter-spacing:-0.46px;">19.5</span>
<span class="t" style="left:456.50px;top:135.00px;font-size:11px;line-height:12px;letter-spacing:-0.71px;">dBm</span>
<span class="t" style="left:30.20px;top:216.00px;font-size:11px;line-height:12px;letter-spacing:0.28px;font-weight:700;">Upstream</span>
<span class="t" style="left:98.30px;top:216.00px;font-size:11px;line-height:12px;letter-spacing:-0.26px;">Bitrate</span>
<span class="t" style="left:171.40px;top:216.00px;font-size:11px;line-height:12px;letter-spacing:-0.28px;">kbit/s</span>
<span class="t" style="left:202.20px;top:216.00px;font-size:11px;line-height:12px;letter-spacing:-0.25px;">attenuation</span>
<span class="t" style="left:258.00px;top:214.00px;font-size:12px;line-height:14px;letter-spacing:-0.46px;">14.8</span>
<span class="t" style="left:286.80px;top:216.00px;font-size:11px;line-height:12px;transform:scaleX(0.8687);">dB</span>
<span class="t" style="left:306.20px;top:216.00px;font-size:11px;line-height:12px;transform:scaleX(0.849);">SNRM</span>
<span class="t" style="left:338.00px;top:214.00px;font-size:12px;line-height:14px;letter-spacing:-0.46px;">15.2</span>
<span class="t" style="left:366.60px;top:216.00px;font-size:11px;line-height:12px;transform:scaleX(0.8687);">dB</span>
<span class="t" style="left:387.40px;top:216.00px;font-size:11px;line-height:12px;letter-spacing:0.28px;">tx pwr</span>
<span class="t" style="left:423.00px;top:214.00px;font-size:12px;line-height:14px;letter-spacing:-0.46px;">12.3</span>
<span class="t" style="left:456.50px;top:216.00px;font-size:11px;line-height:12px;letter-spacing:-0.71px;">dBm</span>
<span class="t" style="left:10.80px;top:169.00px;font-size:9.5px;line-height:11px;letter-spacing:-0.04px;color:#A0A0A0;">bcm6348 v0.7</span>
<span class="t" style="left:13.00px;top:183.00px;font-size:9.5px;line-height:11px;letter-spacing:-0.14px;color:#A0A0A0;">254.77 bmips</span>
<span class="t" style="left:170.40px;top:167.00px;font-size:9.5px;line-height:11px;letter-spacing:-0.13px;">L0 (full-power mode)</span>
<span class="t" style="left:297.50px;top:168.00px;font-size:9.5px;line-height:11px;letter-spacing:-0.36px;">ADSL2+</span>
<span class="t" style="left:297.50px;top:180.00px;font-size:9.5px;line-height:11px;letter-spacing:0.06px;">fast path</span>
<span class="t" style="left:43.02px;top:238.00px;font-size:10px;line-height:11px;">8</span>
<span class="t" style="left:72.90px;top:238.00px;font-size:10px;line-height:11px;transform:scaleX(0.8809);">40</span>
<span class="t" style="left:104.90px;top:238.00px;font-size:10px;line-height:11px;transform:scaleX(0.8809);">72</span>
<span class="t" style="left:134.60px;top:238.00px;font-size:10px;line-height:11px;transform:scaleX(0.8629);">104</span>
<span class="t" style="left:166.60px;top:238.00px;font-size:10px;line-height:11px;transform:scaleX(0.8629);">136</span>
<span class="t" style="left:198.60px;top:238.00px;font-size:10px;line-height:11px;transform:scaleX(0.8629);">168</span>
<span class="t" style="left:230.60px;top:238.00px;font-size:10px;line-height:11px;transform:scaleX(0.8629);">200</span>
<span class="t" style="left:262.60px;top:238.00px;font-size:10px;line-height:11px;transform:scaleX(0.8629);">232</span>
<span class="t" style="left:294.60px;top:238.00px;font-size:10px;line-height:11px;transform:scaleX(0.8629);">264</span>
<span class="t" style="left:326.60px;top:238.00px;font-size:10px;line-height:11px;transform:scaleX(0.8629);">296</span>
<span class="t" style="left:358.60px;top:238.00px;font-size:10px;line-height:11px;transform:scaleX(0.8629);">328</span>
<span class="t" style="left:390.60px;top:238.00px;font-size:10px;line-height:11px;transform:scaleX(0.8629);">360</span>
<span class="t" style="left:422.60px;top:238.00px;font-size:10px;line-height:11px;transform:scaleX(0.8629);">392</span>
<span class="t" style="left:454.60px;top:238.00px;font-size:10px;line-height:11px;transform:scaleX(0.8629);">424</span>
<span class="t" style="left:486.60px;top:238.00px;font-size:10px;line-height:11px;transform:scaleX(0.8629);">456</span>
<span class="t" style="left:507.00px;top:238.00px;font-size:9.5px;line-height:11px;letter-spacing:-0.4px;">Tone</span>
<span class="t" style="left:41.60px;top:309.00px;font-size:10px;line-height:11px;transform:scaleX(0.8809);">34</span>
<span class="t" style="left:71.30px;top:309.00px;font-size:10px;line-height:11px;transform:scaleX(0.8629);">172</span>
<span class="t" style="left:103.30px;top:309.00px;font-size:10px;line-height:11px;transform:scaleX(0.8629);">310</span>
<span class="t" style="left:135.30px;top:309.00px;font-size:10px;line-height:11px;transform:scaleX(0.8629);">448</span>
<span class="t" style="left:167.30px;top:309.00px;font-size:10px;line-height:11px;transform:scaleX(0.8629);">586</span>
<span class="t" style="left:199.30px;top:309.00px;font-size:10px;line-height:11px;transform:scaleX(0.8629);">724</span>
<span class="t" style="left:231.30px;top:309.00px;font-size:10px;line-height:11px;transform:scaleX(0.8629);">862</span>
<span class="t" style="left:260.80px;top:309.00px;font-size:10px;line-height:11px;transform:scaleX(0.8719);">1000</span>
<span class="t" style="left:292.54px;top:309.00px;font-size:10px;line-height:11px;letter-spacing:-0.53px;">1138</span>
<span class="t" style="left:324.80px;top:309.00px;font-size:10px;line-height:11px;transform:scaleX(0.8719);">1276</span>
<span class="t" style="left:356.80px;top:309.00px;font-size:10px;line-height:11px;transform:scaleX(0.8719);">1414</span>
<span class="t" style="left:388.80px;top:309.00px;font-size:10px;line-height:11px;transform:scaleX(0.8719);">1552</span>
<span class="t" style="left:420.80px;top:309.00px;font-size:10px;line-height:11px;transform:scaleX(0.8719);">1690</span>
<span class="t" style="left:452.80px;top:309.00px;font-size:10px;line-height:11px;transform:scaleX(0.8719);">1828</span>
<span class="t" style="left:484.80px;top:309.00px;font-size:10px;line-height:11px;transform:scaleX(0.8719);">1966</span>
<span class="t" style="left:510.80px;top:309.00px;font-size:9.5px;line-height:11px;letter-spacing:-0.23px;">kHz</span>
<span class="t" style="left:43.02px;top:381.00px;font-size:10px;line-height:11px;">8</span>
<span class="t" style="left:72.90px;top:381.00px;font-size:10px;line-height:11px;transform:scaleX(0.8809);">40</span>
<span class="t" style="left:104.90px;top:381.00px;font-size:10px;line-height:11px;transform:scaleX(0.8809);">72</span>
<span class="t" style="left:134.60px;top:381.00px;font-size:10px;line-height:11px;transform:scaleX(0.8629);">104</span>
<span class="t" style="left:166.60px;top:381.00px;font-size:10px;line-height:11px;transform:scaleX(0.8629);">136</span>
<span class="t" style="left:198.60px;top:381.00px;font-size:10px;line-height:11px;transform:scaleX(0.8629);">168</span>
<span class="t" style="left:230.60px;top:381.00px;font-size:10px;line-height:11px;transform:scaleX(0.8629);">200</span>
<span class="t" style="left:262.60px;top:381.00px;font-size:10px;line-height:11px;transform:scaleX(0.8629);">232</span>
<span class="t" style="left:294.60px;top:381.00px;font-size:10px;line-height:11px;transform:scaleX(0.8629);">264</span>
<span class="t" style="left:326.60px;top:381.00px;font-size:10px;line-height:11px;transform:scaleX(0.8629);">296</span>
<span class="t" style="left:358.60px;top:381.00px;font-size:10px;line-height:11px;transform:scaleX(0.8629);">328</span>
<span class="t" style="left:390.60px;top:381.00px;font-size:10px;line-height:11px;transform:scaleX(0.8629);">360</span>
<span class="t" style="left:422.60px;top:381.00px;font-size:10px;line-height:11px;transform:scaleX(0.8629);">392</span>
<span class="t" style="left:454.60px;top:381.00px;font-size:10px;line-height:11px;transform:scaleX(0.8629);">424</span>
<span class="t" style="left:486.60px;top:381.00px;font-size:10px;line-height:11px;transform:scaleX(0.8629);">456</span>
<span class="t" style="left:507.00px;top:381.00px;font-size:9.5px;line-height:11px;letter-spacing:-0.4px;">Tone</span>
<span class="t" style="left:41.60px;top:453.00px;font-size:10px;line-height:11px;transform:scaleX(0.8809);">34</span>
<span class="t" style="left:71.30px;top:453.00px;font-size:10px;line-height:11px;transform:scaleX(0.8629);">172</span>
<span class="t" style="left:103.30px;top:453.00px;font-size:10px;line-height:11px;transform:scaleX(0.8629);">310</span>
<span class="t" style="left:135.30px;top:453.00px;font-size:10px;line-height:11px;transform:scaleX(0.8629);">448</span>
<span class="t" style="left:167.30px;top:453.00px;font-size:10px;line-height:11px;transform:scaleX(0.8629);">586</span>
<span class="t" style="left:199.30px;top:453.00px;font-size:10px;line-height:11px;transform:scaleX(0.8629);">724</span>
<span class="t" style="left:231.30px;top:453.00px;font-size:10px;line-height:11px;transform:scaleX(0.8629);">862</span>
<span class="t" style="left:260.80px;top:453.00px;font-size:10px;line-height:11px;transform:scaleX(0.8719);">1000</span>
<span class="t" style="left:292.54px;top:453.00px;font-size:10px;line-height:11px;letter-spacing:-0.53px;">1138</span>
<span class="t" style="left:324.80px;top:453.00px;font-size:10px;line-height:11px;transform:scaleX(0.8719);">1276</span>
<span class="t" style="left:356.80px;top:453.00px;font-size:10px;line-height:11px;transform:scaleX(0.8719);">1414</span>
<span class="t" style="left:388.80px;top:453.00px;font-size:10px;line-height:11px;transform:scaleX(0.8719);">1552</span>
<span class="t" style="left:420.80px;top:453.00px;font-size:10px;line-height:11px;transform:scaleX(0.8719);">1690</span>
<span class="t" style="left:452.80px;top:453.00px;font-size:10px;line-height:11px;transform:scaleX(0.8719);">1828</span>
<span class="t" style="left:484.80px;top:453.00px;font-size:10px;line-height:11px;transform:scaleX(0.8719);">1966</span>
<span class="t" style="left:510.80px;top:453.00px;font-size:9.5px;line-height:11px;letter-spacing:-0.23px;">kHz</span>
<span class="t" style="left:16.41px;top:247.00px;font-size:9.5px;line-height:11px;letter-spacing:-0.19px;">14</span>
<span class="t" style="left:529.00px;top:247.00px;font-size:9.5px;line-height:11px;letter-spacing:-0.19px;">14</span>
<span class="t" style="left:16.77px;top:259.00px;font-size:9.5px;line-height:11px;letter-spacing:0.16px;">11</span>
<span class="t" style="left:529.00px;top:259.00px;font-size:9.5px;line-height:11px;letter-spacing:0.16px;">11</span>
<span class="t" style="left:21.50px;top:271.00px;font-size:9.5px;line-height:11px;">8</span>
<span class="t" style="left:529.00px;top:271.00px;font-size:9.5px;line-height:11px;">8</span>
<span class="t" style="left:21.50px;top:283.00px;font-size:9.5px;line-height:11px;">5</span>
<span class="t" style="left:529.00px;top:283.00px;font-size:9.5px;line-height:11px;">5</span>
<span class="t" style="left:21.50px;top:295.00px;font-size:9.5px;line-height:11px;">2</span>
<span class="t" style="left:529.00px;top:295.00px;font-size:9.5px;line-height:11px;">2</span>
<span class="t" style="left:16.41px;top:326.00px;font-size:9.5px;line-height:11px;letter-spacing:-0.19px;">50</span>
<span class="t" style="left:529.00px;top:326.00px;font-size:9.5px;line-height:11px;letter-spacing:-0.19px;">50</span>
<span class="t" style="left:16.41px;top:336.00px;font-size:9.5px;line-height:11px;letter-spacing:-0.19px;">40</span>
<span class="t" style="left:529.00px;top:336.00px;font-size:9.5px;line-height:11px;letter-spacing:-0.19px;">40</span>
<span class="t" style="left:16.41px;top:346.00px;font-size:9.5px;line-height:11px;letter-spacing:-0.19px;">30</span>
<span class="t" style="left:529.00px;top:346.00px;font-size:9.5px;line-height:11px;letter-spacing:-0.19px;">30</span>
<span class="t" style="left:16.41px;top:356.00px;font-size:9.5px;line-height:11px;letter-spacing:-0.19px;">20</span>
<span class="t" style="left:529.00px;top:356.00px;font-size:9.5px;line-height:11px;letter-spacing:-0.19px;">20</span>
<span class="t" style="left:16.41px;top:366.00px;font-size:9.5px;line-height:11px;letter-spacing:-0.19px;">10</span>
<span class="t" style="left:529.00px;top:366.00px;font-size:9.5px;line-height:11px;letter-spacing:-0.19px;">10</span>
<span class="t" style="left:11.52px;top:397.00px;font-size:9.5px;line-height:11px;letter-spacing:-0.29px;">100</span>
<span class="t" style="left:529.00px;top:397.00px;font-size:9.5px;line-height:11px;letter-spacing:-0.29px;">100</span>
<span class="t" style="left:16.41px;top:407.00px;font-size:9.5px;line-height:11px;letter-spacing:-0.19px;">80</span>
<span class="t" style="left:529.00px;top:407.00px;font-size:9.5px;line-height:11px;letter-spacing:-0.19px;">80</span>
<span class="t" style="left:16.41px;top:417.00px;font-size:9.5px;line-height:11px;letter-spacing:-0.19px;">60</span>
<span class="t" style="left:529.00px;top:417.00px;font-size:9.5px;line-height:11px;letter-spacing:-0.19px;">60</span>
<span class="t" style="left:16.41px;top:427.00px;font-size:9.5px;line-height:11px;letter-spacing:-0.19px;">40</span>
<span class="t" style="left:529.00px;top:427.00px;font-size:9.5px;line-height:11px;letter-spacing:-0.19px;">40</span>
<span class="t" style="left:16.41px;top:437.00px;font-size:9.5px;line-height:11px;letter-spacing:-0.19px;">20</span>
<span class="t" style="left:529.00px;top:437.00px;font-size:9.5px;line-height:11px;letter-spacing:-0.19px;">20</span>
<span class="t" style="left:31.20px;top:249.00px;font-size:9.5px;line-height:11px;letter-spacing:-0.04px;color:#C4C4C4;">Bit Loading Values   bits per tone</span>
<span class="t" style="left:423.30px;top:248.00px;font-size:9.5px;line-height:11px;letter-spacing:0.08px;color:#A3A9C4;">http://modemhilfe.de.vu</span>
<span class="t m" style="left:35.00px;top:301.00px;font-size:8px;line-height:9px;color:#E8E8E8;">0</span>
<span class="t" style="left:31.20px;top:321.00px;font-size:9.5px;line-height:11px;letter-spacing:-0.07px;color:#C4C4C4;">SNR  dB per tone</span>
<span class="t" style="left:441.00px;top:320.00px;font-size:9.5px;line-height:11px;letter-spacing:0.11px;color:#A3A9C4;">http://dmt.mhilfe.de</span>
<span class="t m" style="left:35.00px;top:373.00px;font-size:8px;line-height:9px;color:#E8E8E8;">0</span>
<span class="t m" style="left:35.00px;top:394.00px;font-size:8px;line-height:9px;color:#E8E8E8;">0</span>
<span class="t" style="left:81.00px;top:393.00px;font-size:9px;line-height:10px;letter-spacing:0.03px;color:#C4C4C4;">25dB@300kHz</span>
<span class="t" style="left:38.40px;top:442.00px;font-size:9px;line-height:10px;letter-spacing:-0.13px;color:#D8D8D8;">Low 23dB</span>
<span class="t" style="left:199.40px;top:423.00px;font-size:16px;line-height:17px;letter-spacing:0.11px;font-weight:700;color:rgba(128,128,128,0.55);">channel characteristic</span>
<span class="t m" style="left:198.30px;top:443.00px;font-size:9px;line-height:10px;letter-spacing:0.53px;color:#848484;">attenuation (DS)  dB per tone</span>
<span class="t" style="left:434.80px;top:432.00px;font-size:9.5px;line-height:11px;letter-spacing:-0.06px;color:#CFCFCF;">estimated loop length</span>
<span class="t m" style="left:440.70px;top:443.00px;font-size:9px;line-height:10px;letter-spacing:0.48px;color:#D4D4D4;">1638m - 3438m</span>
<span class="t" style="left:41.50px;top:470.00px;font-size:9.5px;line-height:11px;letter-spacing:-0.42px;">Reload</span>
<span class="t dt" style="left:119.00px;top:472.00px;font-size:11px;line-height:12px;letter-spacing:-0.13px;color:#A0A0A0;">extQuery</span>
<span class="t dt" style="left:186.80px;top:472.00px;font-size:11px;line-height:12px;letter-spacing:0.08px;color:#A0A0A0;">snrft</span>
<span class="t dt" style="left:235.40px;top:472.00px;font-size:11px;line-height:12px;letter-spacing:0.19px;color:#A0A0A0;">bitswap</span>
<span class="t" style="left:285.80px;top:472.00px;font-size:11px;line-height:12px;letter-spacing:-0.27px;">SNR-Monitor Interval:</span>
<span class="t" style="left:389.60px;top:471.00px;font-size:10px;line-height:11px;">8</span>
<span class="t" style="left:407.50px;top:471.00px;font-size:10px;line-height:11px;letter-spacing:-0.35px;">sec</span>
<span class="t" style="left:440.99px;top:470.00px;font-size:9.5px;line-height:11px;letter-spacing:-0.01px;">Start</span>
<span class="t dt" style="left:492.92px;top:470.00px;font-size:9.5px;line-height:11px;letter-spacing:-0.46px;color:#A0A0A0;">Stop</span>
<span class="t" style="left:8.40px;top:495.00px;font-size:9.5px;line-height:11px;letter-spacing:0.01px;">Information</span>
<span class="t" style="left:10.00px;top:509.00px;font-size:9.5px;line-height:11px;letter-spacing:0.05px;">adslctl version 1.0</span>
<span class="t" style="left:10.00px;top:521.00px;font-size:9.5px;line-height:11px;letter-spacing:0.02px;">ADSL PHY: AnnexA version - A2pB025c.d20m</span>
<span class="t" style="left:10.00px;top:533.00px;font-size:9.5px;line-height:11px;letter-spacing:-0.01px;">System Type: F@ST2404</span>
<span class="t" style="left:253.90px;top:500.00px;font-size:11px;line-height:12px;letter-spacing:-0.26px;">automatic DSL-Monitoring</span>
<span class="t" style="left:277.39px;top:519.00px;font-size:11px;line-height:12px;letter-spacing:-0.23px;">Aktivieren</span>
<span class="t dt" style="left:366.48px;top:519.00px;font-size:11px;line-height:12px;letter-spacing:-0.1px;color:#A0A0A0;">Deaktivieren</span>
<span class="t" style="left:461.83px;top:519.00px;font-size:11px;line-height:12px;letter-spacing:-0.29px;">Konfiguration</span>
<span class="t" style="left:288.40px;top:540.00px;font-size:11px;line-height:12px;letter-spacing:-0.1px;">activate Auto-DSL-Monitoring on startup</span>
<span class="t" style="left:52.00px;top:574.00px;font-size:12px;line-height:14px;transform:scaleX(0.8565);">Refresh</span>
<span class="t" style="left:155.00px;top:586.00px;font-size:9.5px;line-height:11px;letter-spacing:0.11px;">http://dmt.mhilfe.de</span>
<span class="t" style="left:300.20px;top:586.00px;font-size:9.5px;line-height:11px;letter-spacing:0.08px;">http://modemhilfe.de.vu</span>
<span class="t" style="left:445.00px;top:586.00px;font-size:9.5px;line-height:11px;letter-spacing:0.14px;">http://forum.mhilfe.de</span>
<span class="t" style="left:400.44px;top:608.00px;font-size:12px;line-height:14px;letter-spacing:-0.64px;">Ready</span>
<span class="t" style="left:797.10px;top:608.00px;font-size:12px;line-height:14px;transform:scaleX(0.8856);">v8.07</span>
<span class="t" style="left:608.70px;top:7.00px;font-size:12px;line-height:14px;transform:scaleX(0.8726);">Info2</span>
<span class="t" style="left:649.70px;top:7.00px;font-size:12px;line-height:14px;transform:scaleX(0.8913);">Info3</span>
<span class="t" style="left:691.00px;top:7.00px;font-size:12px;line-height:14px;transform:scaleX(0.8562);">CLI</span>
<span class="t" style="left:566.40px;top:6.00px;font-size:12px;line-height:14px;transform:scaleX(0.8463);">Info1</span>
<span class="t" style="left:565.40px;top:26.00px;font-size:9.5px;line-height:11px;letter-spacing:0.06px;">Statistics</span>
<span class="t m" style="left:567.70px;top:47.00px;font-size:9px;line-height:10px;letter-spacing:0.58px;">Counters        Down            Up</span>
<span class="t m" style="left:567.70px;top:63.00px;font-size:9px;line-height:10px;letter-spacing:0.58px;">SF:             1311052         1330571</span>
<span class="t m" style="left:567.70px;top:71.00px;font-size:9px;line-height:10px;letter-spacing:0.58px;">SFErr:          1129            6</span>
<span class="t m" style="left:567.70px;top:79.00px;font-size:9px;line-height:10px;letter-spacing:0.58px;">RS:             0               0</span>
<span class="t m" style="left:567.70px;top:87.00px;font-size:9px;line-height:10px;letter-spacing:0.58px;">RSCorr:         0               0</span>
<span class="t m" style="left:567.70px;top:95.00px;font-size:9px;line-height:10px;letter-spacing:0.58px;">RSUnCorr:       0               0</span>
<span class="t m" style="left:567.70px;top:111.00px;font-size:9px;line-height:10px;letter-spacing:0.58px;">HEC:            688             0</span>
<span class="t m" style="left:567.70px;top:119.00px;font-size:9px;line-height:10px;letter-spacing:0.58px;">OCD:            19              0</span>
<span class="t m" style="left:567.70px;top:127.00px;font-size:9px;line-height:10px;letter-spacing:0.58px;">LCD:            0               0</span>
<span class="t m" style="left:567.70px;top:135.00px;font-size:9px;line-height:10px;letter-spacing:0.58px;">Total Cells:    266908149               10</span>
<span class="t m" style="left:567.70px;top:143.00px;font-size:9px;line-height:10px;letter-spacing:0.58px;">Data Cells:     8894196         1709505915</span>
<span class="t m" style="left:567.70px;top:151.00px;font-size:9px;line-height:10px;letter-spacing:0.58px;">Drop Cells:     0</span>
<span class="t m" style="left:567.70px;top:159.00px;font-size:9px;line-height:10px;letter-spacing:0.58px;">Bit Errors:     0               108479</span>
<span class="t m" style="left:567.70px;top:175.00px;font-size:9px;line-height:10px;letter-spacing:0.58px;">ES:             873             668</span>
<span class="t m" style="left:567.70px;top:183.00px;font-size:9px;line-height:10px;letter-spacing:0.58px;">SES:            2               27</span>
<span class="t m" style="left:567.70px;top:191.00px;font-size:9px;line-height:10px;letter-spacing:0.58px;">UAS:            35176           24040652</span>
<span class="t m" style="left:567.70px;top:199.00px;font-size:9px;line-height:10px;letter-spacing:0.58px;">AS:             21289</span>
<span class="t m" style="left:567.70px;top:215.00px;font-size:9px;line-height:10px;letter-spacing:0.58px;">INP:            0.00            0.00</span>
<span class="t m" style="left:567.70px;top:223.00px;font-size:9px;line-height:10px;letter-spacing:0.58px;">PER:            16.23           16.18</span>
<span class="t m" style="left:567.70px;top:231.00px;font-size:9px;line-height:10px;letter-spacing:0.58px;">delay:          0.24            0.24</span>
<span class="t m" style="left:567.70px;top:239.00px;font-size:9px;line-height:10px;letter-spacing:0.58px;">OR:             32.02           10.87</span>
<span class="t m" style="left:567.70px;top:255.00px;font-size:9px;line-height:10px;letter-spacing:0.58px;">Bitswap:        2253            15</span>
<span class="t m" style="left:567.70px;top:279.00px;font-size:9px;line-height:10px;letter-spacing:0.58px;">Total time = 1 days 2hours 31min 55sec</span>
<span class="t m" style="left:567.70px;top:287.00px;font-size:9px;line-height:10px;letter-spacing:0.58px;">SF  = 1362365   CRC = 2100</span>
<span class="t m" style="left:567.70px;top:295.00px;font-size:9px;line-height:10px;letter-spacing:0.58px;">LOS = 2   LOF = 18   ES = 873</span>
<span class="t m" style="left:567.70px;top:311.00px;font-size:9px;line-height:10px;letter-spacing:0.58px;">Latest 1 day time = 2hours 31min 55sec</span>
<span class="t m" style="left:567.70px;top:319.00px;font-size:9px;line-height:10px;letter-spacing:0.58px;">SF  = 561359   CRC = 513</span>
<span class="t m" style="left:567.70px;top:327.00px;font-size:9px;line-height:10px;letter-spacing:0.58px;">LOS = 0   LOF = 0   ES = 381</span>
<span class="t m" style="left:567.70px;top:343.00px;font-size:9px;line-height:10px;letter-spacing:0.58px;">Previous 1 day time = 24hours 0sec</span>
<span class="t m" style="left:567.70px;top:351.00px;font-size:9px;line-height:10px;letter-spacing:0.58px;">SF  = 801006   CRC = 1587</span>
<span class="t m" style="left:567.70px;top:359.00px;font-size:9px;line-height:10px;letter-spacing:0.58px;">LOS = 2   LOF = 18   ES = 492</span>
<span class="t" style="left:565.70px;top:396.00px;font-size:9.5px;line-height:11px;">Error Statistic (last 60 minutes/15min.intervals)</span>
<span class="t" style="left:594.60px;top:408.00px;font-size:9px;line-height:10px;letter-spacing:0.17px;color:#CC99D0;">CRC</span>
<span class="t" style="left:624.80px;top:408.00px;font-size:9px;line-height:10px;letter-spacing:-0.16px;color:#C8C850;">ES</span>
<span class="t" style="left:647.00px;top:408.00px;font-size:9px;line-height:10px;letter-spacing:0.06px;color:#FF8C1A;">LOF</span>
<span class="t" style="left:675.00px;top:408.00px;font-size:9px;line-height:10px;letter-spacing:-0.01px;color:#FF4040;">LOS</span>
<span class="t" style="left:705.00px;top:408.00px;font-size:9px;line-height:10px;letter-spacing:0.14px;color:#A8B0C4;">currCRC</span>
<span class="t m" style="left:574.88px;top:413.00px;font-size:9px;line-height:10px;letter-spacing:0.58px;color:#E0E0E0;">60</span>
<span class="t m" style="left:741.30px;top:413.00px;font-size:9px;line-height:10px;letter-spacing:0.58px;color:#E0E0E0;">60</span>
<span class="t m" style="left:574.88px;top:423.00px;font-size:9px;line-height:10px;letter-spacing:0.58px;color:#E0E0E0;">50</span>
<span class="t m" style="left:741.30px;top:423.00px;font-size:9px;line-height:10px;letter-spacing:0.58px;color:#E0E0E0;">50</span>
<span class="t m" style="left:574.88px;top:433.00px;font-size:9px;line-height:10px;letter-spacing:0.58px;color:#E0E0E0;">40</span>
<span class="t m" style="left:741.30px;top:433.00px;font-size:9px;line-height:10px;letter-spacing:0.58px;color:#E0E0E0;">40</span>
<span class="t m" style="left:574.88px;top:443.00px;font-size:9px;line-height:10px;letter-spacing:0.58px;color:#E0E0E0;">30</span>
<span class="t m" style="left:741.30px;top:443.00px;font-size:9px;line-height:10px;letter-spacing:0.58px;color:#E0E0E0;">30</span>
<span class="t m" style="left:574.88px;top:453.00px;font-size:9px;line-height:10px;letter-spacing:0.58px;color:#E0E0E0;">20</span>
<span class="t m" style="left:741.30px;top:453.00px;font-size:9px;line-height:10px;letter-spacing:0.58px;color:#E0E0E0;">20</span>
<span class="t m" style="left:574.88px;top:463.00px;font-size:9px;line-height:10px;letter-spacing:0.58px;color:#E0E0E0;">10</span>
<span class="t m" style="left:741.30px;top:463.00px;font-size:9px;line-height:10px;letter-spacing:0.58px;color:#E0E0E0;">10</span>
<span class="t m" style="left:580.88px;top:473.00px;font-size:9px;line-height:10px;color:#E0E0E0;">0</span>
<span class="t m" style="left:741.30px;top:473.00px;font-size:9px;line-height:10px;color:#E0E0E0;">0</span>
<span class="t m" style="left:585.80px;top:478.00px;font-size:9px;line-height:10px;letter-spacing:0.58px;color:#E0E0E0;">-60</span>
<span class="t m" style="left:616.00px;top:478.00px;font-size:9px;line-height:10px;letter-spacing:0.58px;color:#E0E0E0;">-45</span>
<span class="t m" style="left:645.50px;top:478.00px;font-size:9px;line-height:10px;letter-spacing:0.58px;color:#E0E0E0;">-30</span>
<span class="t m" style="left:675.70px;top:478.00px;font-size:9px;line-height:10px;letter-spacing:0.58px;color:#E0E0E0;">-15</span>
<span class="t m" style="left:706.00px;top:478.00px;font-size:9px;line-height:10px;color:#E0E0E0;">0</span>
<span class="t" style="left:718.50px;top:478.00px;font-size:9px;line-height:10px;color:#A8B8DC;">curr</span>
<span class="t m" style="left:790.20px;top:411.00px;font-size:9px;line-height:10px;font-weight:700;">-</span>
<span class="t m" style="left:800.80px;top:411.00px;font-size:9px;line-height:10px;letter-spacing:0.58px;">x64</span>
<span class="t m" style="left:790.20px;top:419.00px;font-size:9px;line-height:10px;font-weight:700;">-</span>
<span class="t m" style="left:800.80px;top:419.00px;font-size:9px;line-height:10px;letter-spacing:0.58px;">x32</span>
<span class="t m" style="left:790.20px;top:427.00px;font-size:9px;line-height:10px;font-weight:700;">-</span>
<span class="t m" style="left:800.80px;top:427.00px;font-size:9px;line-height:10px;letter-spacing:0.58px;">x16</span>
<span class="t m" style="left:790.20px;top:435.00px;font-size:9px;line-height:10px;font-weight:700;">-</span>
<span class="t m" style="left:800.80px;top:435.00px;font-size:9px;line-height:10px;letter-spacing:0.58px;">x 8</span>
<span class="t m" style="left:790.20px;top:443.00px;font-size:9px;line-height:10px;font-weight:700;">-</span>
<span class="t m" style="left:800.80px;top:443.00px;font-size:9px;line-height:10px;letter-spacing:0.58px;">x 4</span>
<span class="t m" style="left:790.20px;top:451.00px;font-size:9px;line-height:10px;font-weight:700;">-</span>
<span class="t m" style="left:800.80px;top:451.00px;font-size:9px;line-height:10px;letter-spacing:0.58px;">x 2</span>
<span class="t m" style="left:790.20px;top:459.00px;font-size:9px;line-height:10px;font-weight:700;">-</span>
<span class="t m" style="left:800.80px;top:459.00px;font-size:9px;line-height:10px;letter-spacing:0.58px;">x 1</span>
<span class="t" style="left:765.50px;top:476.00px;font-size:9.5px;line-height:11px;letter-spacing:0.04px;">scaling factor</span>
<span class="t" style="left:565.70px;top:489.00px;font-size:9.5px;line-height:11px;letter-spacing:-0.38px;">Gaps</span>
<span class="t m" style="left:567.70px;top:504.00px;font-size:9px;line-height:10px;letter-spacing:0.58px;">Gap1 1652kHz-1656kHz (Tone383)</span>
<span class="t m" style="left:567.70px;top:512.00px;font-size:9px;line-height:10px;letter-spacing:0.58px;">Gap2 1660kHz-1665kHz (Tone385)</span>
<span class="t m" style="left:567.70px;top:520.00px;font-size:9px;line-height:10px;letter-spacing:0.58px;">Gap3 1669kHz-1673kHz (Tone387)</span>
<span class="t m" style="left:567.70px;top:528.00px;font-size:9px;line-height:10px;letter-spacing:0.58px;">Gap4 1682kHz-1686kHz (Tone390)</span>
<span class="t m" style="left:567.70px;top:536.00px;font-size:9px;line-height:10px;letter-spacing:0.58px;">Gap5 1703kHz-1716kHz (Tone395-Tone397)</span>
<span class="t m" style="left:567.70px;top:544.00px;font-size:9px;line-height:10px;letter-spacing:0.58px;">Gap6 1811kHz-1816kHz (Tone420)</span>
<span class="t" style="left:594.25px;top:574.00px;font-size:12px;line-height:14px;transform:scaleX(0.8837);">DSL Resync.</span>
<span class="t" style="left:717.22px;top:574.00px;font-size:12px;line-height:14px;letter-spacing:-0.54px;">Reboot/Resync</span>
<div style="left:565px;top:552px;width:256px;height:4px;z-index:5;background:#F0F0F0;border-top:1px solid #E3E3E3;box-shadow:inset 0 2px 0 -1px #FFF;"></div>
</div>
</body></html>
